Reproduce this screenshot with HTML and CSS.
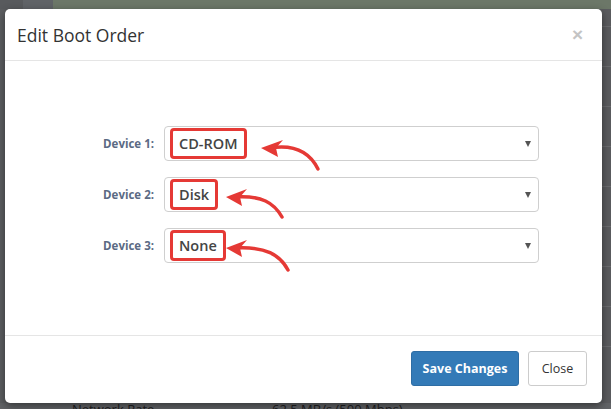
FILE: index.html
```html
<!DOCTYPE html>
<html>
<head>
<meta charset="utf-8">
<link rel="stylesheet" href="styles.css">
</head>
<body>
<div class="page">
  <div class="topbar">
    <div class="seg seg-a"></div>
    <div class="seg seg-b"></div>
    <div class="seg seg-c"></div>
  </div>
  <div class="main">
    <div class="main-left"></div>
    <div class="main-right"></div>
  </div>
  <div class="bottom-row">
    <span class="bottom-label">Network Rate</span>
    <span class="bottom-value">62.5 MB/s (500 Mbps)</span>
  </div>
</div>

<div class="modal">
  <div class="modal-header">
    <h4 class="modal-title">Edit Boot Order</h4>
    <span class="modal-close">&times;</span>
  </div>
  <div class="modal-body">
    <div class="form-row">
      <label class="form-label">Device 1:</label>
      <div class="select">
        <span class="mark">CD-ROM</span>
        <span class="caret"></span>
      </div>
    </div>
    <div class="form-row">
      <label class="form-label">Device 2:</label>
      <div class="select">
        <span class="mark">Disk</span>
        <span class="caret"></span>
      </div>
    </div>
    <div class="form-row">
      <label class="form-label">Device 3:</label>
      <div class="select">
        <span class="mark">None</span>
        <span class="caret"></span>
      </div>
    </div>
  </div>
  <div class="modal-footer">
    <button class="btn btn-primary">Save Changes</button>
    <button class="btn btn-default">Close</button>
  </div>
</div>

<svg class="arrows" width="611" height="409" viewBox="0 0 611 409">
  <g fill="none" stroke="#e53935" stroke-width="3.5" stroke-linecap="round">
    <path d="M318,169 C310,153 295,144 270,148"/>
    <path d="M282,217 C274,203 262,195 234,197"/>
    <path d="M288,270 C280,255 266,246 234,248"/>
  </g>
  <g fill="#e53935">
    <polygon points="261,148 283,140 276,148 278,157"/>
    <polygon points="226,197 247,189 240,197 242,206"/>
    <polygon points="226,248 247,240 240,248 242,257"/>
  </g>
</svg>
</body>
</html>
```
FILE: styles.css
```css
html, body {
  margin: 0;
  padding: 0;
}
body {
  width: 611px;
  height: 409px;
  overflow: hidden;
  background: #5f6164;
  font-family: "Open Sans", "Liberation Sans", sans-serif;
  position: relative;
}
.page {
  display: flex;
  flex-direction: column;
  height: 409px;
}
.topbar {
  display: flex;
  height: 9px;
}
.seg-a { width: 23px; background: #585a5d; }
.seg-b { width: 30px; background: #606367; }
.seg-c { flex: 1; background: #6c7768; }
.main {
  display: flex;
  height: 394px;
}
.main-left { flex: 1; background: #5c5e61; }
.main-right {
  width: 9px;
  background: repeating-linear-gradient(to bottom, #5a5b5e 0, #5a5b5e 39px, #6a6b6e 39px, #6a6b6e 40px);
  background-position: 0 -22px;
}
.bottom-row {
  flex: 1;
  background: #616366;
  position: relative;
  font-size: 13px;
  color: #1f2022;
  overflow: hidden;
}
.bottom-label {
  position: absolute;
  left: 72px;
  top: -3px;
  white-space: nowrap;
}
.bottom-value {
  position: absolute;
  left: 272px;
  top: -3px;
  white-space: nowrap;
}

.modal {
  position: absolute;
  left: 5px;
  top: 9px;
  width: 597px;
  height: 394px;
  background: #fff;
  border-radius: 5px;
  box-shadow: 0 3px 9px rgba(0,0,0,0.45);
  display: flex;
  flex-direction: column;
}
.modal-header {
  height: 52px;
  box-sizing: border-box;
  border-bottom: 1px solid #e5e5e5;
  display: flex;
  align-items: center;
  justify-content: space-between;
  padding: 0 19px 0 12px;
}
.modal-title {
  margin: 0;
  font-size: 17.5px;
  font-weight: 400;
  color: #333;
  padding-top: 1px;
}
.modal-close {
  font-size: 19px;
  font-weight: 700;
  color: #c4c4c4;
  line-height: 1;
  font-family: "Liberation Sans", sans-serif;
}
.modal-body {
  flex: 1;
  padding-top: 65px;
  display: flex;
  flex-direction: column;
  gap: 16px;
}
.form-row {
  display: flex;
  align-items: center;
}
.form-label {
  width: 149px;
  margin-right: 10px;
  text-align: right;
  font-size: 11.5px;
  font-weight: 700;
  color: #5b6a84;
}
.select {
  width: 375px;
  height: 35px;
  box-sizing: border-box;
  border: 1px solid #cfcfcf;
  border-radius: 4px;
  display: flex;
  align-items: center;
  justify-content: space-between;
  padding: 0 7px 0 5px;
}
.mark {
  border: 3px solid #e53935;
  border-radius: 4px;
  padding: 3px 6px;
  font-size: 14.5px;
  line-height: 19px;
  color: #444;
  font-weight: 600;
}
.caret {
  width: 0;
  height: 0;
  border-left: 3.5px solid transparent;
  border-right: 3.5px solid transparent;
  border-top: 6px solid #555;
}
.modal-footer {
  height: 68px;
  box-sizing: border-box;
  border-top: 1px solid #e5e5e5;
  display: flex;
  justify-content: flex-end;
  align-items: flex-start;
  padding: 15px 15px 0;
  gap: 9px;
}
.btn {
  height: 35px;
  box-sizing: border-box;
  border-radius: 3px;
  font-family: "Open Sans", "Liberation Sans", sans-serif;
  font-size: 12.5px;
  padding: 0;
  white-space: nowrap;
  cursor: pointer;
}
.btn-primary {
  width: 108px;
  background: #337ab7;
  border: 1px solid #2e6da4;
  color: #fff;
  font-weight: 700;
}
.btn-default {
  width: 59px;
  background: #fff;
  border: 1px solid #ccc;
  color: #333;
}
.arrows {
  position: absolute;
  left: 0;
  top: 0;
  pointer-events: none;
}
```
